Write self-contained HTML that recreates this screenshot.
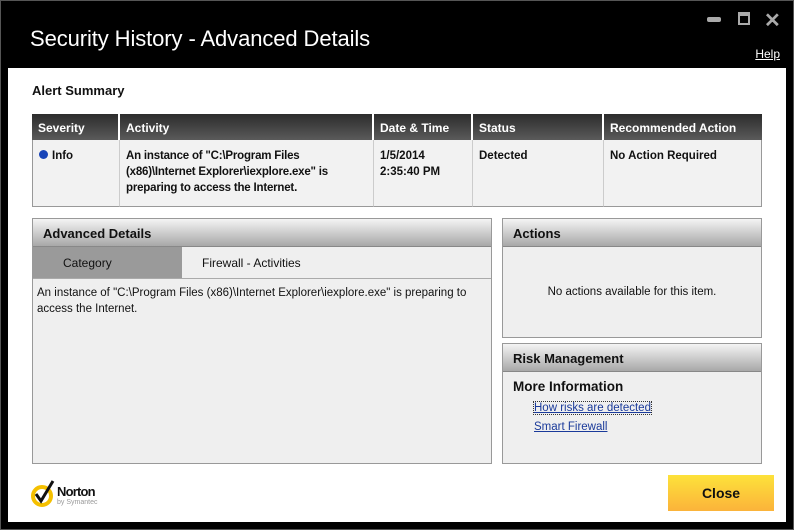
<!DOCTYPE html>
<html><head><style>
*{margin:0;padding:0;box-sizing:border-box}
body{width:794px;height:530px;background:#000;position:relative;overflow:hidden;font-family:"Liberation Sans",sans-serif;color:#111}
.frame{left:0;top:0;width:794px;height:530px;border:1px solid #555}
.abs{position:absolute}
.title{left:30px;top:26px;color:#fff;font-size:22px;letter-spacing:-0.1px}
.help{right:14px;top:47px;color:#fff;font-size:12px;text-decoration:underline}
.content{left:8px;top:68px;width:778px;height:454px;background:#fff}
.b{font-weight:bold}
.th{background:linear-gradient(#2c2c2c,#5a5a5a);color:#fff;font-size:12px;font-weight:bold;height:26px;top:114px;padding:7px 6px;border-right:2px solid #fff}
.td{background:#f2f2f2;top:140px;height:67px;font-size:11.5px;font-weight:bold;padding:8px 6px;line-height:16px;border-right:1px solid #ccc;border-bottom:1px solid #999}
.panel{background:#efefef;border:1px solid #999}
.ph{background:linear-gradient(#f4f4f4,#a8a8a8);height:28px;font-size:13px;font-weight:bold;padding:7px 10px;border-bottom:1px solid #888}
a{color:#1a3a9a;text-decoration:underline}
</style></head><body>
<div class="abs frame"></div>
<div class="abs title">Security History - Advanced Details</div>
<div class="abs" style="left:707px;top:17px;width:14px;height:5px;background:#aaa;border-radius:2px"></div>
<div class="abs" style="left:738px;top:12px;width:12px;height:13px;border:2px solid #aaa;border-top-width:4px"></div>
<div class="abs" style="left:764px;top:8px;color:#aaa;font-size:20px;font-weight:bold">✕</div>
<div class="abs help">Help</div>
<div class="abs content"></div>
<div class="abs b" style="left:32px;top:83px;font-size:13px">Alert Summary</div>
<div class="abs th" style="left:32px;width:88px">Severity</div>
<div class="abs th" style="left:120px;width:254px">Activity</div>
<div class="abs th" style="left:374px;width:99px">Date &amp; Time</div>
<div class="abs th" style="left:473px;width:131px">Status</div>
<div class="abs th" style="left:604px;width:158px;border-right:0">Recommended Action</div>
<div class="abs td" style="left:32px;width:88px;border-left:1px solid #999"><span style="display:inline-block;width:9px;height:9px;border-radius:50%;background:#1844b8;margin-right:4px"></span>Info</div>
<div class="abs td" style="left:120px;width:254px;letter-spacing:-0.2px">An instance of "C:\Program Files (x86)\Internet Explorer\iexplore.exe" is preparing to access the Internet.</div>
<div class="abs td" style="left:374px;width:99px">1/5/2014<br>2:35:40 PM</div>
<div class="abs td" style="left:473px;width:131px">Detected</div>
<div class="abs td" style="left:604px;width:158px;border-right:1px solid #999">No Action Required</div>

<div class="abs panel" style="left:32px;top:218px;width:460px;height:246px">
 <div class="ph">Advanced Details</div>
 <div style="height:32px;border-bottom:1px solid #aaa;background:#efefef;position:relative">
  <div style="position:absolute;left:0;top:0;width:149px;height:31px;background:#9a9a9a;font-size:12px;padding:9px 0 0 30px">Category</div>
  <div style="position:absolute;left:169px;top:9px;font-size:12px">Firewall - Activities</div>
 </div>
 <div style="font-size:11.5px;line-height:16px;padding:6px 4px;width:452px">An instance of "C:\Program Files (x86)\Internet Explorer\iexplore.exe" is preparing to access the Internet.</div>
</div>
<div class="abs panel" style="left:502px;top:218px;width:260px;height:120px">
 <div class="ph">Actions</div>
 <div style="text-align:center;font-size:11.5px;margin-top:39px">No actions available for this item.</div>
</div>
<div class="abs panel" style="left:502px;top:343px;width:260px;height:121px">
 <div class="ph">Risk Management</div>
 <div class="b" style="font-size:13.5px;margin:7px 0 0 10px">More Information</div>
 <div style="font-size:11.5px;margin:8px 0 0 31px"><a style="outline:1px dotted #333">How risks are detected</a></div>
 <div style="font-size:11.5px;margin:7px 0 0 31px"><a>Smart Firewall</a></div>
</div>
<svg class="abs" style="left:31px;top:479px" width="26" height="30" viewBox="0 0 26 30"><circle cx="11" cy="17" r="9" fill="none" stroke="#f5c000" stroke-width="4"/><path d="M5 15 L10 22 L22 2" fill="none" stroke="#111" stroke-width="3"/></svg>
<div class="abs b" style="left:57px;top:484px;font-size:13px;letter-spacing:-0.8px">Norton</div>
<div class="abs" style="left:57px;top:499px;font-size:7px;color:#999">by Symantec</div>
<div class="abs b" style="left:668px;top:475px;width:106px;height:36px;background:linear-gradient(#fde23a,#fbb33a);font-size:14px;text-align:center;line-height:36px">Close</div>
</body></html>
